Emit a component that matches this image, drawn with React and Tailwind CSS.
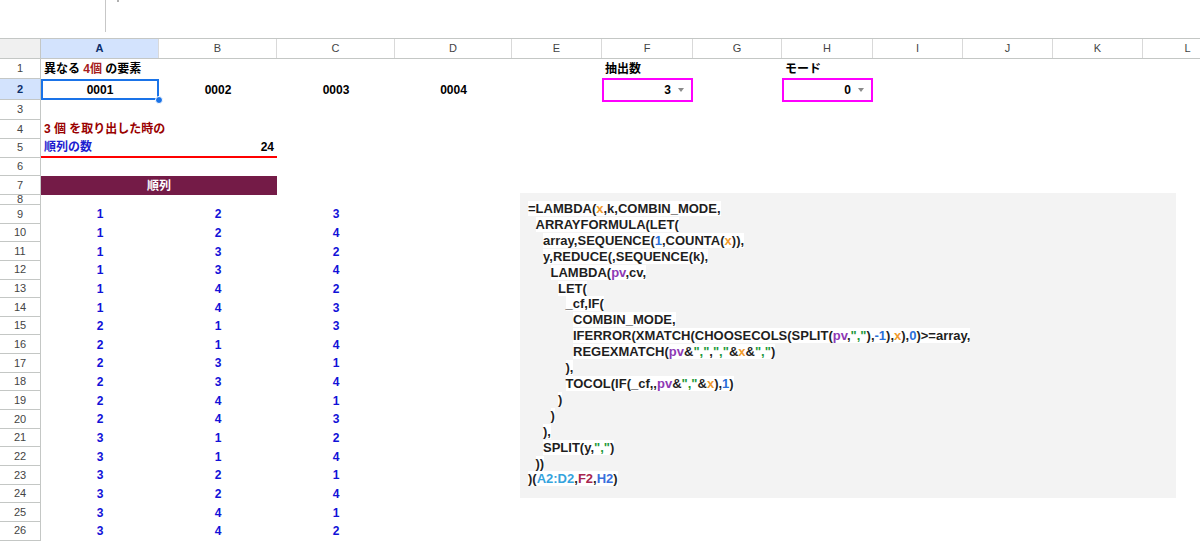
import React from "react";

const cols = [
	{ k: "A", w: "w-[118px]" },
	{ k: "B", w: "w-[118px]" },
	{ k: "C", w: "w-[118px]" },
	{ k: "D", w: "w-[117px]" },
	{ k: "E", w: "w-[90px]" },
	{ k: "F", w: "w-[91px]" },
	{ k: "G", w: "w-[89px]" },
	{ k: "H", w: "w-[91px]" },
	{ k: "I", w: "w-[90px]" },
	{ k: "J", w: "w-[90px]" },
	{ k: "K", w: "w-[90px]" },
	{ k: "L", w: "w-[90px]" },
];

const perms = [
	[1, 2, 3], [1, 2, 4], [1, 3, 2], [1, 3, 4], [1, 4, 2], [1, 4, 3],
	[2, 1, 3], [2, 1, 4], [2, 3, 1], [2, 3, 4], [2, 4, 1], [2, 4, 3],
	[3, 1, 2], [3, 1, 4], [3, 2, 1], [3, 2, 4], [3, 4, 1], [3, 4, 2],
];

const colorOf = {
	o: "text-[#f09a2c]",
	b: "text-[#2b6fd8]",
	p: "text-[#8e3ab5]",
	g: "text-[#1f9a3c]",
	c: "text-[#35a3dd]",
	r: "text-[#a8254f]",
	h: "text-[#3a6fdc]",
};

const indents = ["pl-0", "pl-[7.5px]", "pl-[15px]", "pl-[22.5px]", "pl-[30px]", "pl-[37.5px]", "pl-[45px]"];

const formula = [
	[0, [["=LAMBDA("], ["x", "o"], [",k,COMBIN_MODE,"]]],
	[1, [["ARRAYFORMULA(LET("]]],
	[2, [["array,SEQUENCE("], ["1", "b"], [",COUNTA("], ["x", "o"], [")),"]]],
	[2, [["y,REDUCE(,SEQUENCE(k),"]]],
	[3, [["LAMBDA("], ["pv", "p"], [",cv,"]]],
	[4, [["LET("]]],
	[5, [["_cf,IF("]]],
	[6, [["COMBIN_MODE,"]]],
	[6, [["IFERROR(XMATCH(CHOOSECOLS(SPLIT("], ["pv", "p"], [","], ['","', "g"], ["),"], ["-1", "b"], ["),"], ["x", "o"], ["),"], ["0", "b"], [")>=array,"]]],
	[6, [["REGEXMATCH("], ["pv", "p"], ["&"], ['","', "g"], [","], ['","', "g"], ["&"], ["x", "o"], ["&"], ['","', "g"], [")"]]],
	[5, [["),"]]],
	[5, [["TOCOL(IF(_cf,,"], ["pv", "p"], ["&"], ['","', "g"], ["&"], ["x", "o"], ["),"], ["1", "b"], [")"]]],
	[4, [[")"]]],
	[3, [[")"]]],
	[2, [["),"]]],
	[2, [["SPLIT(y,"], ['","', "g"], [")"]]],
	[1, [["))"]]],
	[0, [[")("], ["A2:D2", "c"], [","], ["F2", "r"], [","], ["H2", "h"], [")"]]],
];

const RowHead = ({ n, active }) => (
	<div className={"w-[41px] shrink-0 flex items-center justify-center border-r border-b border-[#c4c7c5] text-[11px] overflow-hidden " + (active ? "bg-[#d3e3fd] text-[#0b2e6b] font-bold" : "bg-white text-[#444]")}>
		{n}
	</div>
);

const Dropdown = ({ value }) => (
	<div className="w-[91px] shrink-0 relative flex items-center justify-end pr-[9px] gap-[7px]">
		<div className="absolute -inset-y-[1.5px] inset-x-0 border-[2.5px] border-[#ff00ff]" />
		<span>{value}</span>
		<span className="w-0 h-0 border-l-[3px] border-r-[3px] border-t-[4px] border-l-transparent border-r-transparent border-t-[#8a8a8a]" />
	</div>
);

export default function App() {
	return (
		<div className="relative w-[1200px] h-[542px] overflow-hidden bg-white font-['Liberation_Sans','Noto_Sans_CJK_JP',sans-serif] text-[12px] text-black">
			{/* formula bar strip */}
			<div className="h-[38px] flex">
				<div className="w-[105px] shrink-0" />
				<div className="w-px h-[32px] bg-[#c7c7c7]" />
				<div className="ml-[11px] w-[2px] h-[2px] bg-[#b0b0b0]" />
			</div>

			{/* column headers */}
			<div className="flex h-[21px] border-t border-b border-[#c4c7c5]">
				<div className="w-[41px] shrink-0 bg-[#f0f0f0] border-r border-[#c4c7c5]" />
				{cols.map((c) => (
					<div key={c.k} className={c.w + " shrink-0 flex items-center justify-center border-r border-[#d9d9d9] text-[11px] " + (c.k === "A" ? "bg-[#d3e3fd] text-[#0b2e6b] font-bold" : "text-[#444]")}>
						{c.k}
					</div>
				))}
			</div>

			{/* row 1 */}
			<div className="flex h-[20px]">
				<RowHead n={1} />
				<div className="w-[118px] shrink-0 flex items-center pl-[3px] font-bold whitespace-nowrap">
					異なる&nbsp;<span className="text-[#a61c1c]">4個</span>&nbsp;の要素
				</div>
				<div className="w-[443px] shrink-0" />
				<div className="w-[91px] shrink-0 flex items-center pl-[3px] font-bold">抽出数</div>
				<div className="w-[89px] shrink-0" />
				<div className="w-[91px] shrink-0 flex items-center pl-[3px] font-bold">モード</div>
			</div>

			{/* row 2 */}
			<div className="flex h-[21px] font-bold">
				<RowHead n={2} active />
				<div className="w-[118px] shrink-0 relative flex items-center justify-center">
					<div className="absolute inset-0 border-2 border-[#1a73e8]" />
					<div className="absolute -right-[4px] -bottom-[4px] w-[8px] h-[8px] rounded-full bg-[#1a73e8] border border-white" />
					0001
				</div>
				<div className="w-[118px] shrink-0 flex items-center justify-center">0002</div>
				<div className="w-[118px] shrink-0 flex items-center justify-center">0003</div>
				<div className="w-[117px] shrink-0 flex items-center justify-center">0004</div>
				<div className="w-[90px] shrink-0" />
				<Dropdown value="3" />
				<div className="w-[89px] shrink-0" />
				<Dropdown value="0" />
			</div>

			{/* row 3 */}
			<div className="flex h-[20px]">
				<RowHead n={3} />
			</div>

			{/* row 4 */}
			<div className="flex h-[18.5px]">
				<RowHead n={4} />
				<div className="w-[236px] shrink-0 flex items-center pl-[3px] font-bold text-[#990000] whitespace-nowrap">
					3 個 を取り出した時の
				</div>
			</div>

			{/* row 5 */}
			<div className="flex h-[19px]">
				<RowHead n={5} />
				<div className="w-[236px] shrink-0 flex items-center justify-between pl-[3px] pr-[3px] font-bold border-b-2 border-[#ff0000]">
					<span className="text-[#1c1cd0]">順列の数</span>
					<span>24</span>
				</div>
			</div>

			{/* row 6 */}
			<div className="flex h-[18.5px]">
				<RowHead n={6} />
			</div>

			{/* row 7 */}
			<div className="flex h-[19px]">
				<RowHead n={7} />
				<div className="w-[236px] shrink-0 flex items-center justify-center bg-[#741b47] text-white font-bold">順列</div>
			</div>

			{/* row 8 */}
			<div className="flex h-[10px]">
				<RowHead n={8} />
			</div>

			{/* rows 9-26 */}
			{perms.map((p, i) => (
				<div key={i} className="flex h-[18.65px]">
					<RowHead n={i + 9} />
					{p.map((v, j) => (
						<div key={j} className="w-[118px] shrink-0 flex items-center justify-center font-bold text-[#1111d8]">
							{v}
						</div>
					))}
				</div>
			))}

			{/* text box drawn over the sheet */}
			<div className="absolute left-[520px] top-[193px] w-[656px] h-[305px] bg-[#f3f3f3] pt-[8px] pl-[8px] text-[13px] leading-[15.9px] font-bold text-[#1f1f1f] font-['Liberation_Sans',sans-serif]">
				{formula.map(([ind, segs], i) => (
					<div key={i} className={indents[ind] + " whitespace-pre"}>
						<span className="bg-white">
							{segs.map(([t, c], j) => (
								<span key={j} className={c ? colorOf[c] : ""}>{t}</span>
							))}
						</span>
					</div>
				))}
			</div>
		</div>
	);
}
